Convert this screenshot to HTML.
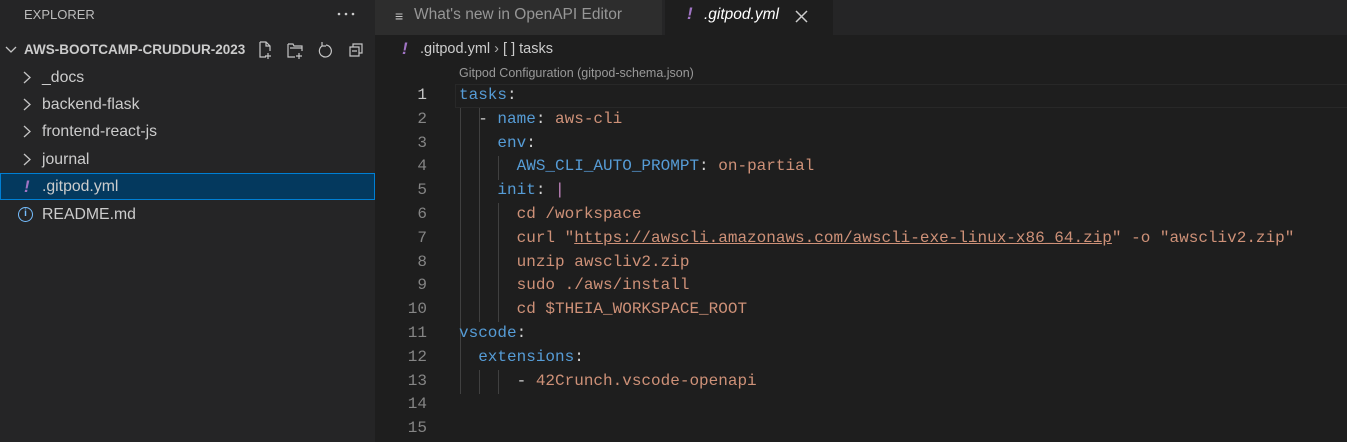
<!DOCTYPE html>
<html><head><meta charset="utf-8"><style>
*{margin:0;padding:0;box-sizing:border-box}
body{width:1347px;height:442px;overflow:hidden;background:#1e1e1e;font-family:"Liberation Sans",sans-serif;position:relative}
.side{position:absolute;left:0;top:0;width:375px;height:442px;background:#252526;color:#cccccc}
.abs{position:absolute;white-space:nowrap}
.row{position:absolute;left:0;width:375px;height:27px;font-size:15.8px;line-height:27px;color:#cccccc}
.chev{position:absolute;left:22px;top:7px}
.tabs{position:absolute;left:375px;top:0;width:972px;height:35px;background:#252526}
.code{position:absolute;left:375px;top:84px;width:972px;font-family:"Liberation Mono",monospace;font-size:16px}
.ln{position:absolute;height:23.8px;line-height:23.8px;width:52px;text-align:right;color:#858585;left:0}
.tx{position:absolute;left:84px;height:23.8px;line-height:23.8px;white-space:pre;color:#ce9178}
.k{color:#569cd6}.p{color:#d4d4d4}
.g{position:absolute;width:1px;background:#404040}
</style></head><body>
<div class="side">
<div class="abs" style="left:24px;top:7px;font-size:13px;color:#bbbbbb">EXPLORER</div>
<svg class="abs" style="left:337px;top:12px" width="20" height="4" fill="#cccccc"><circle cx="2" cy="2" r="1.3"/><circle cx="9" cy="2" r="1.3"/><circle cx="16" cy="2" r="1.3"/></svg>
<svg class="abs" style="left:5px;top:45px" width="12" height="10" fill="none" stroke="#c5c5c5" stroke-width="1.3"><path d="M1 2l5 5 5-5"/></svg>
<div class="abs" style="left:24px;top:42px;font-size:13.5px;font-weight:bold;color:#cccccc">AWS-BOOTCAMP-CRUDDUR-2023</div>
<svg class="abs" style="left:257px;top:40px" width="112" height="20" fill="none" stroke="#c5c5c5" stroke-width="1.2">
<path d="M3 2h6l4 4v5M3 2v15h6M9 2v4h4M11 13v6M8 16h6"/>
<path d="M31 4h5l1 2h8v5M31 4v13h7M33 8h12M42 13v6M39 16h6"/>
<path d="M65 6a6 6 0 1 0 4 -1M65 2v4h4"/>
<path d="M93 7h9v9h-9zM96 7V4h9v9h-3M95 11h5"/>
</svg>
<div class="row" style="top:64px"><svg class="chev" width="10" height="13" fill="none" stroke="#c5c5c5" stroke-width="1.3"><path d="M2 1l6 5.5-6 5.5"/></svg><span class="abs" style="left:42px">_docs</span></div>
<div class="row" style="top:91px"><svg class="chev" width="10" height="13" fill="none" stroke="#c5c5c5" stroke-width="1.3"><path d="M2 1l6 5.5-6 5.5"/></svg><span class="abs" style="left:42px">backend-flask</span></div>
<div class="row" style="top:118px"><svg class="chev" width="10" height="13" fill="none" stroke="#c5c5c5" stroke-width="1.3"><path d="M2 1l6 5.5-6 5.5"/></svg><span class="abs" style="left:42px">frontend-react-js</span></div>
<div class="row" style="top:146px"><svg class="chev" width="10" height="13" fill="none" stroke="#c5c5c5" stroke-width="1.3"><path d="M2 1l6 5.5-6 5.5"/></svg><span class="abs" style="left:42px">journal</span></div>
<div class="row" style="top:173px;background:#04395e;border:1px solid #007fd4;line-height:25px"><span class="abs" style="left:23px;color:#a074c4;font-weight:bold;font-style:italic;font-size:17px">!</span><span class="abs" style="left:41px">.gitpod.yml</span></div>
<div class="row" style="top:201px"><span class="abs" style="left:18px;top:6px;width:15px;height:15px;border:1.3px solid #75beff;border-radius:50%;font-size:10px;line-height:12px;text-align:center;color:#75beff;font-weight:bold">i</span><span class="abs" style="left:42px">README.md</span></div>
</div>
<div class="tabs">
<div class="abs" style="left:0;top:0;width:287px;height:35px;background:#2d2d2d"></div>
<div class="abs" style="left:20px;top:8px;font-size:14px;color:#c5c5c5">&#8801;</div>
<div class="abs" style="left:39px;top:6px;font-size:15.5px;color:#969696">What's new in OpenAPI Editor</div>
<div class="abs" style="left:290px;top:0;width:168px;height:35px;background:#1e1e1e"></div>
<div class="abs" style="left:312px;top:4px;font-size:17px;font-weight:bold;font-style:italic;color:#a074c4">!</div>
<div class="abs" style="left:329px;top:6px;font-size:15.5px;font-style:italic;color:#ffffff">.gitpod.yml</div>
<svg class="abs" style="left:420px;top:10px" width="13" height="13" stroke="#cccccc" stroke-width="1.5"><path d="M1 1l11 11M12 1L1 12"/></svg>
</div>
<div class="abs" style="left:402px;top:39px;font-size:17px;font-weight:bold;font-style:italic;color:#a074c4">!</div>
<div class="abs" style="left:420px;top:41px;font-size:14.5px;color:#cccccc">.gitpod.yml <span style="color:#aaa">&#x203A;</span> [ ] tasks</div>
<div class="abs" style="left:459px;top:66px;font-size:12.5px;color:#999999">Gitpod Configuration (gitpod-schema.json)</div>
<div class="code">
<div class="abs" style="left:80px;top:0;width:892px;height:24px;border:1px solid #282828;border-right:none"></div>
<div class="g" style="left:85px;top:24px;height:286px"></div>
<div class="g" style="left:104px;top:24px;height:214px"></div>
<div class="g" style="left:123px;top:72px;height:24px"></div>
<div class="g" style="left:123px;top:119px;height:119px"></div>
<div class="g" style="left:85px;top:262px;height:48px"></div>
<div class="g" style="left:104px;top:286px;height:24px"></div>
<div class="g" style="left:123px;top:286px;height:24px"></div>
<div class="ln" style="top:0;color:#c6c6c6">1</div><div class="tx" style="top:0"><span class="k">tasks</span><span class="p">:</span></div>
<div class="ln" style="top:23.8px">2</div><div class="tx" style="top:23.8px"><span class="p">  - </span><span class="k">name</span><span class="p">:</span> aws-cli</div>
<div class="ln" style="top:47.6px">3</div><div class="tx" style="top:47.6px">    <span class="k">env</span><span class="p">:</span></div>
<div class="ln" style="top:71.4px">4</div><div class="tx" style="top:71.4px">      <span class="k">AWS_CLI_AUTO_PROMPT</span><span class="p">:</span> on-partial</div>
<div class="ln" style="top:95.2px">5</div><div class="tx" style="top:95.2px">    <span class="k">init</span><span class="p">:</span> <span style="color:#c586c0">|</span></div>
<div class="ln" style="top:119px">6</div><div class="tx" style="top:119px">      cd /workspace</div>
<div class="ln" style="top:142.8px">7</div><div class="tx" style="top:142.8px">      curl "<span style="text-decoration:underline">https://awscli.amazonaws.com/awscli-exe-linux-x86_64.zip</span>" -o "awscliv2.zip"</div>
<div class="ln" style="top:166.6px">8</div><div class="tx" style="top:166.6px">      unzip awscliv2.zip</div>
<div class="ln" style="top:190.4px">9</div><div class="tx" style="top:190.4px">      sudo ./aws/install</div>
<div class="ln" style="top:214.2px">10</div><div class="tx" style="top:214.2px">      cd $THEIA_WORKSPACE_ROOT</div>
<div class="ln" style="top:238px">11</div><div class="tx" style="top:238px"><span class="k">vscode</span><span class="p">:</span></div>
<div class="ln" style="top:261.8px">12</div><div class="tx" style="top:261.8px">  <span class="k">extensions</span><span class="p">:</span></div>
<div class="ln" style="top:285.6px">13</div><div class="tx" style="top:285.6px"><span class="p">      - </span>42Crunch.vscode-openapi</div>
<div class="ln" style="top:309.4px">14</div>
<div class="ln" style="top:333.2px">15</div>
</div>
</body></html>
